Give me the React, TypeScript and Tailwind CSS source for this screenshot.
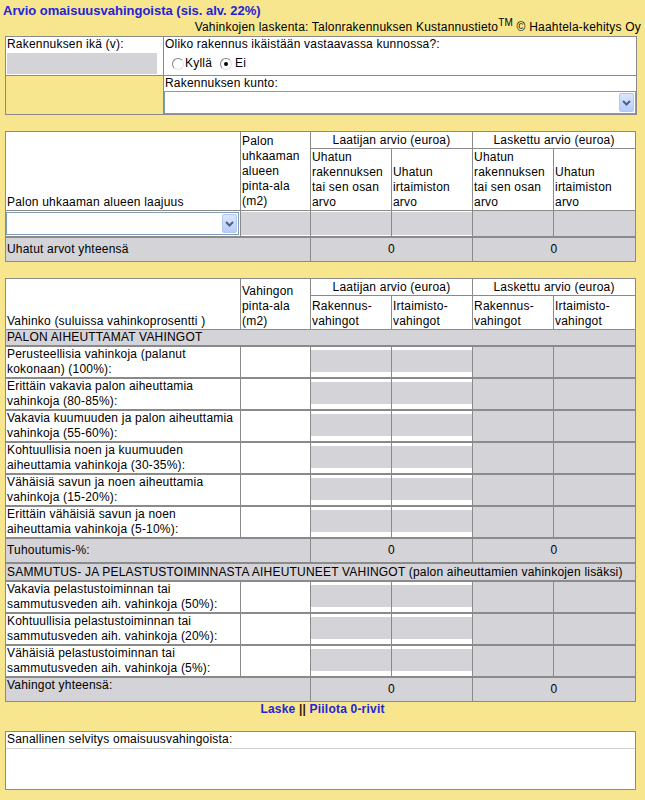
import React from 'react';

const bd = 'border border-[#8a8a8a]';
const gray = 'bg-[#d4d3d7]';

const FIRE: [string, string][] = [
  ['Perusteellisia vahinkoja (palanut', 'kokonaan) (100%):'],
  ['Erittäin vakavia palon aiheuttamia', 'vahinkoja (80-85%):'],
  ['Vakavia kuumuuden ja palon aiheuttamia', 'vahinkoja (55-60%):'],
  ['Kohtuullisia noen ja kuumuuden', 'aiheuttamia vahinkoja (30-35%):'],
  ['Vähäisiä savun ja noen aiheuttamia', 'vahinkoja (15-20%):'],
  ['Erittäin vähäisiä savun ja noen', 'aiheuttamia vahinkoja (5-10%):'],
];
const RESCUE: [string, string][] = [
  ['Vakavia pelastustoiminnan tai', 'sammutusveden aih. vahinkoja (50%):'],
  ['Kohtuullisia pelastustoiminnan tai', 'sammutusveden aih. vahinkoja (20%):'],
  ['Vähäisiä pelastustoiminnan tai', 'sammutusveden aih. vahinkoja (5%):'],
];

function Select({ className = '' }: { className?: string }) {
  return (
    <div className={`flex h-[23px] items-stretch border border-[#7f9db9] bg-white ${className}`}>
      <div className="flex-1" />
      <div className="my-[1px] mr-[1px] flex w-[15px] items-center justify-center rounded-[2px] border border-[#b4c6ef] bg-gradient-to-b from-[#dbe6fd] to-[#b9ccf9]">
        <svg width="9" height="6" viewBox="0 0 9 6">
          <path d="M1 1 L4.5 4.5 L8 1" stroke="#4d6185" strokeWidth="2" fill="none" />
        </svg>
      </div>
    </div>
  );
}

function Radio({ checked }: { checked?: boolean }) {
  return (
    <span className="inline-flex h-[12px] w-[12px] items-center justify-center rounded-full border border-t-[#808080] border-l-[#808080] border-r-[#e4e4e4] border-b-[#e4e4e4] bg-white">
      {checked && <span className="h-[4px] w-[4px] rounded-full bg-black" />}
    </span>
  );
}

function Lines({ lines }: { lines: string[] }) {
  return (
    <>
      {lines.map((l, i) => (
        <div key={i} className="whitespace-nowrap">{l}</div>
      ))}
    </>
  );
}

function Cols() {
  return (
    <colgroup>
      <col className="w-[235px]" />
      <col className="w-[70px]" />
      <col className="w-[81px]" />
      <col className="w-[81px]" />
      <col className="w-[81px]" />
      <col className="w-[82px]" />
    </colgroup>
  );
}

function GroupHeader() {
  return (
    <>
      <td colSpan={2} className={`${bd} h-[17px] bg-white text-center`}>Laatijan arvio (euroa)</td>
      <td colSpan={2} className={`${bd} bg-white text-center`}>Laskettu arvio (euroa)</td>
    </>
  );
}

function DamageRow({ lines }: { lines: [string, string] }) {
  return (
    <tr>
      <td className={`${bd} border-b-2 h-[30px] bg-white px-[1px] align-middle`}>
        <Lines lines={lines} />
      </td>
      <td className={`${bd} border-b-2 bg-white`} />
      <td className={`${bd} border-b-2 bg-white p-0 align-top`}>
        <div className={`mt-[3px] h-[22px] ${gray}`} />
      </td>
      <td className={`${bd} border-b-2 bg-white p-0 align-top`}>
        <div className={`mt-[3px] h-[22px] ${gray}`} />
      </td>
      <td className={`${bd} border-b-2 ${gray}`} />
      <td className={`${bd} border-b-2 ${gray}`} />
    </tr>
  );
}

export default function App() {
  return (
    <div className="min-h-[800px] w-[645px] bg-[#f7e68e] font-['Liberation_Sans',Arial,sans-serif] text-[12px] leading-[15px] tracking-[0.2px] text-black">
      <div className="pl-[3px] pt-[3px] text-[13px] font-bold leading-[16px] tracking-normal text-[#2323d9]">
        Arvio omaisuusvahingoista (sis. alv. 22%)
      </div>
      <div className="mt-[1px] pr-[4px] text-right">
        Vahinkojen laskenta: Talonrakennuksen Kustannustieto<span className="relative -top-[5px] text-[10px]">TM</span> © Haahtela-kehitys Oy
      </div>

      {/* Rakennuksen tiedot */}
      <table className="ml-[5px] mt-[1px] w-[631px] table-fixed border-collapse">
        <colgroup>
          <col className="w-[158px]" />
          <col className="w-[473px]" />
        </colgroup>
        <tbody>
          <tr>
            <td className={`${bd} h-[39px] bg-white p-0 align-top`}>
              <div className="px-[1px]">Rakennuksen ikä (v):</div>
              <div className={`ml-[1px] mt-[1px] h-[21px] w-[150px] ${gray}`} />
            </td>
            <td className={`${bd} bg-white p-0 align-top`}>
              <div className="px-[1px]">Oliko rakennus ikäistään vastaavassa kunnossa?:</div>
              <div className="mt-[4px] flex items-center pl-[8px]">
                <Radio />
                <span className="ml-[1px] mr-[8px]">Kyllä</span>
                <Radio checked />
                <span className="ml-[3px]">Ei</span>
              </div>
            </td>
          </tr>
          <tr>
            <td className={`${bd} h-[39px] p-0`} />
            <td className={`${bd} bg-white p-0 align-top`}>
              <div className="px-[1px]">Rakennuksen kunto:</div>
              <Select className="h-[23px]" />
            </td>
          </tr>
        </tbody>
      </table>

      {/* Uhatut arvot */}
      <table className="ml-[5px] mt-[16px] w-[631px] table-fixed border-collapse">
        <Cols />
        <tbody>
          <tr>
            <td rowSpan={2} className={`${bd} bg-white px-[1px] align-bottom`}>Palon uhkaaman alueen laajuus</td>
            <td rowSpan={2} className={`${bd} bg-white px-[1px] pb-[1px] align-bottom`}>
              <Lines lines={['Palon', 'uhkaaman', 'alueen', 'pinta-ala', '(m2)']} />
            </td>
            <GroupHeader />
          </tr>
          <tr>
            <td className={`${bd} h-[62px] bg-white px-[1px] align-bottom`}>
              <Lines lines={['Uhatun', 'rakennuksen', 'tai sen osan', 'arvo']} />
            </td>
            <td className={`${bd} bg-white px-[1px] align-bottom`}>
              <Lines lines={['Uhatun', 'irtaimiston', 'arvo']} />
            </td>
            <td className={`${bd} bg-white px-[1px] align-bottom`}>
              <Lines lines={['Uhatun', 'rakennuksen', 'tai sen osan', 'arvo']} />
            </td>
            <td className={`${bd} bg-white px-[1px] align-bottom`}>
              <Lines lines={['Uhatun', 'irtaimiston', 'arvo']} />
            </td>
          </tr>
          <tr>
            <td className={`${bd} border-b-2 h-[26px] bg-white p-0 align-top`}>
              <Select className="mr-[1px] mt-[1px] h-[23px]" />
            </td>
            <td className={`${bd} border-b-2 bg-white p-0 align-top`}>
              <div className={`mt-[1px] h-[23px] ${gray}`} />
            </td>
            <td className={`${bd} border-b-2 bg-white p-0 align-top`}>
              <div className={`mt-[1px] h-[23px] ${gray}`} />
            </td>
            <td className={`${bd} border-b-2 bg-white p-0 align-top`}>
              <div className={`mt-[1px] h-[23px] ${gray}`} />
            </td>
            <td className={`${bd} border-b-2 ${gray}`} />
            <td className={`${bd} border-b-2 ${gray}`} />
          </tr>
          <tr>
            <td colSpan={2} className={`${bd} h-[25px] ${gray} px-[1px]`}>Uhatut arvot yhteensä</td>
            <td colSpan={2} className={`${bd} ${gray} text-center`}>0</td>
            <td colSpan={2} className={`${bd} ${gray} text-center`}>0</td>
          </tr>
        </tbody>
      </table>

      {/* Vahingot */}
      <table className="ml-[5px] mt-[16px] w-[631px] table-fixed border-collapse">
        <Cols />
        <tbody>
          <tr>
            <td rowSpan={2} className={`${bd} bg-white px-[1px] align-bottom`}>Vahinko (suluissa vahinkoprosentti )</td>
            <td rowSpan={2} className={`${bd} bg-white px-[1px] align-bottom`}>
              <Lines lines={['Vahingon', 'pinta-ala', '(m2)']} />
            </td>
            <GroupHeader />
          </tr>
          <tr>
            <td className={`${bd} h-[34px] bg-white px-[1px] align-bottom`}>
              <Lines lines={['Rakennus-', 'vahingot']} />
            </td>
            <td className={`${bd} bg-white px-[1px] align-bottom`}>
              <Lines lines={['Irtaimisto-', 'vahingot']} />
            </td>
            <td className={`${bd} bg-white px-[1px] align-bottom`}>
              <Lines lines={['Rakennus-', 'vahingot']} />
            </td>
            <td className={`${bd} bg-white px-[1px] align-bottom`}>
              <Lines lines={['Irtaimisto-', 'vahingot']} />
            </td>
          </tr>
          <tr>
            <td colSpan={6} className={`${bd} border-b-2 h-[16px] ${gray} px-[1px]`}>PALON AIHEUTTAMAT VAHINGOT</td>
          </tr>
          {FIRE.map((l) => <DamageRow key={l[0]} lines={l} />)}
          <tr>
            <td colSpan={2} className={`${bd} border-b-2 h-[25px] ${gray} px-[1px]`}>Tuhoutumis-%:</td>
            <td colSpan={2} className={`${bd} border-b-2 ${gray} text-center`}>0</td>
            <td colSpan={2} className={`${bd} border-b-2 ${gray} text-center`}>0</td>
          </tr>
          <tr>
            <td colSpan={6} className={`${bd} border-b-2 h-[18px] ${gray} px-[1px] whitespace-nowrap`}>
              SAMMUTUS- JA PELASTUSTOIMINNASTA AIHEUTUNEET VAHINGOT (palon aiheuttamien vahinkojen lisäksi)
            </td>
          </tr>
          {RESCUE.map((l) => <DamageRow key={l[0]} lines={l} />)}
          <tr>
            <td colSpan={2} className={`${bd} h-[24px] ${gray} px-[1px] align-top`}>Vahingot yhteensä:</td>
            <td colSpan={2} className={`${bd} ${gray} text-center`}>0</td>
            <td colSpan={2} className={`${bd} ${gray} text-center`}>0</td>
          </tr>
        </tbody>
      </table>

      <div className="text-center font-bold leading-[15px]">
        <a href="#" className="text-[#2323d9]">Laske</a>
        <span className="text-[#3a1010]"> || </span>
        <a href="#" className="text-[#2323d9]">Piilota 0-rivit</a>
      </div>

      {/* Sanallinen selvitys */}
      <div className={`ml-[5px] mt-[14px] w-[631px] ${bd} bg-white`}>
        <div className="h-[17px] border-b border-[#d0d0d0] px-[1px]">Sanallinen selvitys omaisuusvahingoista:</div>
        <div className="h-[40px]" />
      </div>
    </div>
  );
}
